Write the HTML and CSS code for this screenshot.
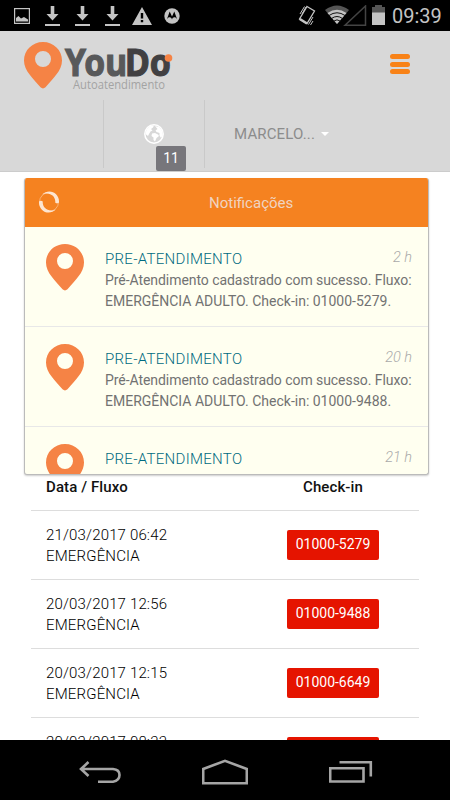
FILE: index.html
```html
<!DOCTYPE html>
<html lang="pt-BR">
<head>
<meta charset="utf-8">
<title>YouDo Autoatendimento</title>
<link rel="stylesheet" href="styles.css">
</head>
<body>
<svg width="0" height="0" class="defs">
  <defs>
    <symbol id="pin" viewBox="0 0 38 47"><path fill-rule="evenodd" d="M19 0C8.300 0 0 8.200 0 18.500C0 29 9 36 16.500 45.300Q19 47.600 21.500 45.300C29 36 38 29 38 18.500C38 8.200 29.700 0 19 0ZM19 9A8 8 0 1 1 19 25A8 8 0 1 1 19 9Z"/></symbol>
    <symbol id="download" viewBox="0 0 15 20"><path d="M5.700 0H9.300V8H13.500L7.500 14.500L1.500 8H5.700ZM0 18H15V20H0Z"/></symbol>
  </defs>
</svg>
<div class="screen">
  <div class="status">
    <svg class="s-pic" width="16" height="16" viewBox="0 0 16 16"><rect x=".6" y=".6" width="14.800" height="14.800" fill="none" stroke="#c4c4c4" stroke-width="1.200"/><path d="M2 13.500V10L4.500 8L7 10.500L10 9L14 11.500V13.500Z"/></svg>
    <svg class="s-down" width="15" height="20"><use href="#download"/></svg>
    <svg class="s-down" width="15" height="20"><use href="#download"/></svg>
    <svg class="s-down" width="15" height="20"><use href="#download"/></svg>
    <svg class="s-warn" width="20" height="18" viewBox="0 0 20 18"><path fill-rule="evenodd" d="M10 0L20 18H0ZM8.800 6V11.500H11.200V6ZM8.800 13V15.300H11.200V13Z"/></svg>
    <svg class="s-moto" width="16" height="16" viewBox="0 0 16 16"><circle cx="8" cy="8" r="7.700"/><path fill="#000" d="M2.800 11.500L5.700 3.500L8 8.500L10.300 3.500L13.200 11.500C12.500 9.800 11.300 9.300 10.300 9.300C9.200 9.300 8.400 10 8 11.500C7.600 10 6.800 9.300 5.700 9.300C4.700 9.300 3.500 9.800 2.800 11.500Z"/></svg>
    <span class="grow"></span>
    <svg class="s-vibe" width="18" height="21" viewBox="0 0 18 21" fill="none" stroke="#c4c4c4"><path stroke-width="1.300" d="M9 1.500L16.500 6L9 18.500L1.500 14Z"/><path stroke-width="2.600" d="M1.800 14L9 18.500"/><path d="M2 9L6.500 1.500M4 9L8 2M10.500 19.500L15 12M12.500 20L15 16"/></svg>
    <svg class="s-wifi" width="42" height="22" viewBox="0 0 42 22"><path fill="#555" d="M0 5Q12 -4 24 5L12 19Z"/><path d="M2.500 8Q12 1.500 21.500 8L12 19Z"/><path d="M4 10.500Q12 5 20 10.500M6.500 13.500Q12 9.500 17.500 13.500M8.500 16.200Q12 13.500 15.500 16.200" fill="none" stroke="#111" stroke-width="1"/><path d="M20 20.300L40.500 1V20.300Z" fill="none" stroke="#444" stroke-width="1.500"/></svg>
    <svg class="s-batt" width="13" height="20" viewBox="0 0 13 20"><path fill="#555" d="M3 0H10V2H13V8H0V2H3Z"/><path d="M0 7.500H13V20H0Z"/></svg>
    <span class="clock">09:39</span>
  </div>

  <header class="top">
    <div class="brand-row">
      <svg class="logo" width="150" height="52" viewBox="0 0 150 52">
        <use href="#pin" x="0" y="1" width="38" height="47" fill="#f58345"/>
        <text x="41" y="34.500" textLength="62" lengthAdjust="spacingAndGlyphs" class="logo-a">You</text>
        <text x="101" y="34.500" textLength="46" lengthAdjust="spacingAndGlyphs" class="logo-a logo-b">Do</text>
        <circle cx="144.500" cy="17" r="3.800" fill="#f58345"/>
        <text x="49" y="47.500" textLength="92" lengthAdjust="spacingAndGlyphs" class="logo-c">Autoatendimento</text>
      </svg>
      <div class="burger"><i></i><i></i><i></i></div>
    </div>
    <div class="menu-row">
      <div class="globe-cell">
        <svg width="20" height="20" viewBox="0 0 20 20"><circle cx="10" cy="10" r="9.200" fill="none" stroke="#fff" stroke-width="1.500"/><path fill="#fff" d="M1.500 10L2.500 5.500L6 2L10 1.500L9 3.500L7 5L8.500 6.500L6.500 7.500L5 10L4 12ZM8 9.500L11 9L14 10.500L15 12L12.500 14L11 17.500L9.500 16L9.500 13.500L7.500 12ZM11 2L15 3L18 6.500L18.800 11L17 14L15.500 11.500L15.500 9L12.500 8L11.500 6.500L13.500 5Z"/></svg>
        <span class="count">11</span>
      </div>
      <div class="user">MARCELO...<b class="caret"></b></div>
    </div>

    <section class="panel">
      <div class="panel-head">
        <svg width="22" height="22" viewBox="0 0 22 22" fill="#fde5d0"><path d="M4 3.500C11-3 21.500 1.500 21 11.500Q19 13.200 17.200 11.500C18 5.500 12 .2 4 3.500Z"/><path d="M18 18.500C11 25 .5 20.500 1 10.500Q3 8.800 4.800 10.500C4 16.500 10 21.800 18 18.500Z"/><circle cx="11" cy="11" r="9.500" fill="none" stroke="#fde5d0" stroke-width=".8" opacity=".6"/></svg>
        <h2>Notificações</h2>
      </div>
      <article class="note">
        <svg class="pin" width="38" height="47"><use href="#pin"/></svg>
        <div class="note-body"><div class="note-top"><h3>PRE-ATENDIMENTO</h3><em>2 h</em></div>
        <p>Pré-Atendimento cadastrado com sucesso. Fluxo:<br><span class="wide">EMERGÊNCIA ADULTO. Check-in: 01000-5279.</span></p></div>
      </article>
      <article class="note">
        <svg class="pin" width="38" height="47"><use href="#pin"/></svg>
        <div class="note-body"><div class="note-top"><h3>PRE-ATENDIMENTO</h3><em>20 h</em></div>
        <p>Pré-Atendimento cadastrado com sucesso. Fluxo:<br><span class="wide">EMERGÊNCIA ADULTO. Check-in: 01000-9488.</span></p></div>
      </article>
      <article class="note">
        <svg class="pin" width="38" height="47"><use href="#pin"/></svg>
        <div class="note-body"><div class="note-top"><h3>PRE-ATENDIMENTO</h3><em>21 h</em></div></div>
      </article>
    </section>
  </header>

  <main class="list">
    <div class="list-head"><span>Data / Fluxo</span><span class="mid">Check-in</span></div>
    <div class="item"><div>21/03/2017 06:42<br>EMERGÊNCIA</div><div class="mid"><span class="tag">01000-5279</span></div></div>
    <div class="item"><div>20/03/2017 12:56<br>EMERGÊNCIA</div><div class="mid"><span class="tag">01000-9488</span></div></div>
    <div class="item"><div>20/03/2017 12:15<br>EMERGÊNCIA</div><div class="mid"><span class="tag">01000-6649</span></div></div>
    <div class="item"><div>20/03/2017 08:33</div><div class="mid"><span class="tag">&nbsp;</span></div></div>
  </main>

  <nav class="keys">
    <svg width="42" height="24" viewBox="0 0 42 24"><path d="M2 9H34Q40.500 9.500 40.500 15T34 21.700H19M9.500 2L2 9L9.500 16"/></svg>
    <svg width="46" height="26" viewBox="0 0 46 26"><path d="M1.200 24.300V10L23 1.800L44.800 10V24.300Z"/></svg>
    <svg width="44" height="24" viewBox="0 0 44 24"><path d="M1.200 8.300H34.500V21.500H1.200ZM10.500 2.200H41.800V16.500"/></svg>
  </nav>
</div>
</body>
</html>
```
FILE: styles.css
```css
* { box-sizing: border-box; }
body { margin: 0; background: #fff; font-family: Roboto, sans-serif; }
.defs { position: absolute; }
.screen { width: 450px; height: 800px; display: flex; flex-direction: column; overflow: hidden; }
svg { display: block; flex: none; }

.status { height: 31px; flex: none; background: #000; display: flex; align-items: flex-start; padding: 5px 8px 0 14px; fill: #c4c4c4; }
.s-pic { margin: 3px 15px 0 0; }
.s-down { margin: 1px 15px 0 0; }
.s-warn { margin: 2px 12px 0 -3px; }
.s-moto { margin-top: 3px; }
.grow { flex: 1; }
.s-vibe { margin-right: 9px; }
.s-wifi { margin-right: 5px; }
.s-batt { margin-right: 7px; }
.clock { color: #c4c4c4; font-size: 20px; line-height: 22px; width: 50px; white-space: nowrap; }

.top { position: relative; height: 141px; flex: none; background: #d8d8d8; border-bottom: 1px solid #ccc; }
.brand-row { height: 69px; display: flex; justify-content: space-between; padding: 10px 40px 0 24px; }
.logo { overflow: visible; }
.logo-a { font-family: "Noto Sans", sans-serif; font-weight: 700; font-size: 38px; fill: #58595b; stroke: #58595b; stroke-width: 1.200; }
.logo-b { fill: #414042; stroke: #414042; }
.logo-c { font-family: "Open Sans", sans-serif; font-size: 13px; fill: #a3a3a3; }
.burger { width: 20px; display: flex; flex-direction: column; gap: 2.500px; padding-top: 13px; }
.burger i { height: 5px; border-radius: 3px; background: #f88217; }
.menu-row { display: flex; height: 68px; margin-left: 103px; }
.globe-cell { position: relative; width: 102px; border: solid #c9c9c9; border-width: 0 1px; padding: 24px 0 0 40px; }
.count { position: absolute; left: 52px; top: 46px; width: 30px; height: 25px; border-radius: 2px; background: #77767b; color: #fff; font-size: 14px; line-height: 24px; text-align: center; }
.user { display: flex; align-items: center; padding-left: 29px; font-size: 15px; color: #8c8c8c; letter-spacing: .15px; }
.caret { border: 4px solid transparent; border-top-color: #fff; border-bottom: 0; margin-left: 6px; }

.panel { position: absolute; z-index: 2; left: 24px; top: 147px; width: 405px; height: 297px; overflow: hidden; background: #fffff0; border: 1px solid #bbb; border-top: 0; border-radius: 3px; box-shadow: 0 1px 2px rgba(0,0,0,.2); }
.panel-head { height: 49px; margin: 0 -1px; background: #f58220; display: flex; align-items: center; padding: 0 0 2px 14px; }
.panel-head h2 { margin: 0; padding: 2px 0 0 149px; font-weight: 400; font-size: 15px; color: #f0d4c0; }
.note { height: 100px; display: flex; padding: 17px 15px 0 21px; border-bottom: 1px solid #e8e8e8; }
.pin { fill: #f58345; }
.note-body { flex: 1; padding-left: 21px; padding-top: 5px; }
.note-top { display: flex; justify-content: space-between; height: 21px; line-height: 21px; }
.note h3 { margin: 0; font-size: 15px; font-weight: 300; color: #006a80; white-space: nowrap; letter-spacing: .3px; }
.note em { font-size: 14.500px; color: #aaa; margin: -2px 1px 0 0; font-weight: 300; }
.note p { margin: 0; font-size: 14px; line-height: 21px; color: #727272; white-space: nowrap; letter-spacing: -.06px; }
.wide { letter-spacing: 0; }

.list { flex: 1; min-height: 0; overflow: hidden; padding: 304px 31px 0; }
.list-head, .item { display: grid; grid-template-columns: 216px 172px; border-bottom: 1px solid #ddd; }
.list-head > :first-child, .item > :first-child { padding-left: 15px; }
.list-head { height: 35px; font-size: 15px; font-weight: 500; line-height: 23px; color: #111; letter-spacing: .1px; }
.item { height: 69px; padding-top: 14px; font-size: 15px; font-weight: 300; line-height: 21px; color: #000; letter-spacing: .16px; }
.mid { text-align: center; }
.tag { display: block; width: 92px; height: 30px; margin: 5px auto 0; background: #e51400; border-radius: 2px; color: #fff; font-size: 14px; font-weight: 400; line-height: 28px; letter-spacing: 0; }

.keys { height: 60px; flex: none; background: #000; display: flex; justify-content: center; align-items: flex-start; gap: 81px; padding: 19px 0 0 2px; fill: none; stroke: #a5a5a5; stroke-width: 2.600; }
.keys svg:first-child, .keys svg:last-child { margin-top: 1px; }
```
